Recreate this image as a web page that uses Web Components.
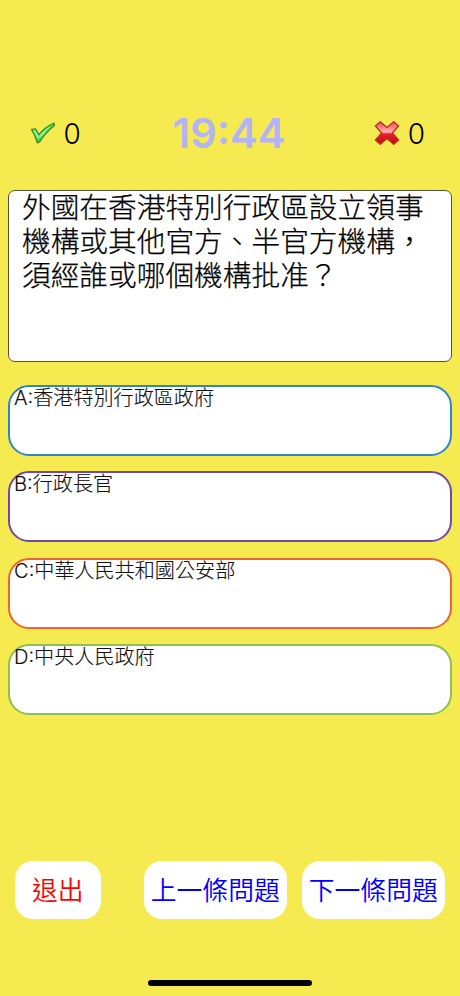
<!DOCTYPE html>
<html lang="zh-Hant">
<head>
<meta charset="utf-8">
<title>Quiz</title>
<style>
html,body{margin:0;height:100%;background:#f5ea4f}
</style>
</head>
<body>
<quiz-app></quiz-app>
<script>
const define = (name, markup) => {
  const t = document.createElement('template');
  t.innerHTML = markup;
  customElements.define(name, class extends HTMLElement {
    constructor() {
      super();
      this.attachShadow({mode: 'open'}).append(t.content.cloneNode(true));
    }
  });
};

define('icon-check', `
<style>:host{display:block;width:26px;height:23px}svg{display:block}</style>
<svg width="26" height="23" viewBox="0 0 26 23">
  <defs><linearGradient id="g" x1="0" y1="0" x2="0" y2="1"><stop offset="0" stop-color="#4fd83e"/><stop offset=".55" stop-color="#8df58a"/><stop offset="1" stop-color="#35b52f"/></linearGradient></defs>
  <path d="M1.6 7.4 L5.4 6.9 Q7.4 9.8 8.8 12.8 Q14.5 5.6 24 1.2 L24.4 3.4 Q15.8 10 9.6 19.8 L7.5 21 Q5 13.4 1.6 7.4Z" fill="url(#g)" stroke="#35962c" stroke-width="1.4" stroke-linejoin="round"/>
  <path d="M4.6 8.8Q7.2 12.7 8.4 16.1Q14 8.3 20 4.7" fill="none" stroke="#a5f5a5" stroke-width=".8"/>
</svg>`);

define('icon-cross', `
<style>:host{display:block;width:26px;height:26px}svg{display:block}</style>
<svg width="26" height="26" viewBox="0 0 26 26">
  <defs><linearGradient id="g" x1="0" y1="0" x2="0" y2="1"><stop offset="0" stop-color="#f04a50"/><stop offset=".46" stop-color="#ffb4b6"/><stop offset=".54" stop-color="#e5222b"/><stop offset="1" stop-color="#c80510"/></linearGradient></defs>
  <path d="M6.3 1.7 L13 7.6 L19.7 1.7 L24.6 6 L18.3 13 L24.6 20 L19.7 24.3 L13 18.4 L6.3 24.3 L1.4 20 L7.7 13 L1.4 6Z" fill="url(#g)" stroke="#b5301f" stroke-width="1.3" stroke-linejoin="round"/>
</svg>`);

define('score-count', `
<style>:host{display:flex;align-items:center;gap:7.5px;font:300 28px/34px Inter,sans-serif;color:#000}
.n{display:block;padding-top:1px}</style>
<slot name="icon"></slot><span class="n"><slot></slot></span>`);

define('quiz-timer', `
<style>:host{display:block;font:600 41.6px/48px Inter,sans-serif;color:#b4b4f4;white-space:nowrap;padding-left:3px}</style>
<slot></slot>`);

define('question-card', `
<style>:host{display:block;box-sizing:border-box;height:172px;border:1px solid #55513a;border-radius:7px;background:#fff;padding:0 13px;
font:300 28.7px/34px "Noto Sans CJK TC",sans-serif;-webkit-text-stroke:.25px #000;color:#000;white-space:nowrap}
div{margin-top:-2.5px}</style>
<div><slot></slot></div>`);

define('answer-option', `
<style>:host{display:block;box-sizing:border-box;height:71px;border:2px solid var(--edge);border-radius:21px;background:#fff;padding:0 4px;
font:300 20.1px/22px Inter,"Noto Sans CJK TC",sans-serif;-webkit-text-stroke:.15px #111;color:#111;white-space:nowrap}</style>
<slot></slot>`);

define('nav-button', `
<style>:host{display:flex;box-sizing:border-box;height:58px;width:var(--w);border-radius:18px;background:#fff;align-items:center;justify-content:center;
font:350 25.8px/38px "Noto Sans CJK TC",sans-serif;color:var(--ink);white-space:nowrap}
span{display:block;margin-top:-2px}</style>
<span><slot></slot></span>`);

define('home-bar', `
<style>:host{display:block;width:164px;height:6px;border-radius:3px;background:#000;margin:0 auto}</style>`);

define('quiz-app', `
<style>
:host{display:flex;flex-direction:column;box-sizing:border-box;width:460px;height:996px;padding:108px 8px 10px;background:#f5ea4f;overflow:hidden}
header{display:grid;grid-template-columns:1fr auto 1fr;align-items:center;height:50px;padding:0 27px 0 22px}
score-count:last-child{justify-self:end}
question-card{margin-top:32px}
.options{display:grid;gap:15.4px;margin-top:23px}
nav{display:flex;margin-top:146px;padding:0 6.5px}
nav nav-button:nth-child(2){margin-left:42.5px}
nav nav-button:nth-child(3){margin-left:14.5px}
home-bar{margin-top:auto}
</style>
<header>
  <score-count><icon-check slot="icon"></icon-check>0</score-count>
  <quiz-timer>19:44</quiz-timer>
  <score-count><icon-cross slot="icon"></icon-cross>0</score-count>
</header>
<question-card>外國在香港特別行政區設立領事<br>機構或其他官方、半官方機構，<br>須經誰或哪個機構批准？</question-card>
<div class="options">
  <answer-option style="--edge:#2f86c5">A:香港特別行政區政府</answer-option>
  <answer-option style="--edge:#7547a6">B:行政長官</answer-option>
  <answer-option style="--edge:#f0642c">C:中華人民共和國公安部</answer-option>
  <answer-option style="--edge:#8cc152">D:中央人民政府</answer-option>
</div>
<nav>
  <nav-button style="--w:86.5px;--ink:#f00">退出</nav-button>
  <nav-button style="--w:143.5px;--ink:#00f">上一條問題</nav-button>
  <nav-button style="--w:143.5px;--ink:#00f">下一條問題</nav-button>
</nav>
<home-bar></home-bar>`);
</script>
</body>
</html>
